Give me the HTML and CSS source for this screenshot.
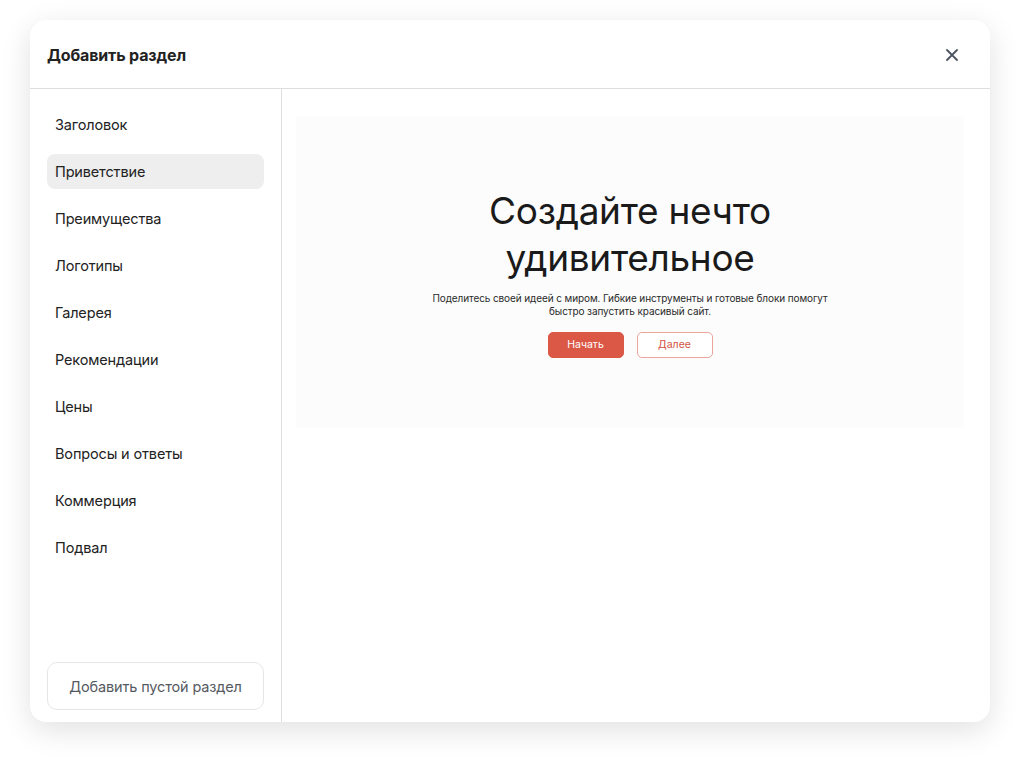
FILE: index.html
```html
<!DOCTYPE html>
<html lang="ru">
<head>
<meta charset="UTF-8">
<meta name="viewport" content="width=device-width, initial-scale=1.0">
<link rel="stylesheet" href="styles.css">
<title>Добавить раздел</title>
</head>
<body>
<div class="modal">
    <div class="modal-header">
        <h1>Добавить раздел</h1>
        <button class="close-btn" aria-label="Закрыть">
            <svg width="14" height="14" viewBox="0 0 14 14" fill="none">
                <path d="M2 2L12 12M12 2L2 12" stroke="#4b5260" stroke-width="1.8" stroke-linecap="round"/>
            </svg>
        </button>
    </div>
    <div class="modal-body">
        <div class="sidebar">
            <ul class="section-list">
                <li>Заголовок</li>
                <li class="active">Приветствие</li>
                <li>Преимущества</li>
                <li>Логотипы</li>
                <li>Галерея</li>
                <li>Рекомендации</li>
                <li>Цены</li>
                <li>Вопросы и ответы</li>
                <li>Коммерция</li>
                <li>Подвал</li>
            </ul>
            <button class="empty-btn">Добавить пустой раздел</button>
        </div>
        <div class="main">
            <div class="preview">
                <h2>Создайте нечто<br>удивительное</h2>
                <p>Поделитесь своей идеей с миром. Гибкие инструменты и готовые блоки помогут<br>быстро запустить красивый сайт.</p>
                <div class="preview-buttons">
                    <button class="btn-primary">Начать</button>
                    <button class="btn-outline">Далее</button>
                </div>
            </div>
        </div>
    </div>
</div>
</body>
</html>
```

FILE: styles.css
```css
body {
    font-family: Inter, "Noto Sans", sans-serif;
    margin: 0;
    padding: 20px 30px 40px;
    background-color: #ffffff;
}

.modal {
    height: 702px;
    background-color: #ffffff;
    border-radius: 16px;
    box-shadow: 0px 8px 30px rgba(0, 0, 0, 0.12);
    display: flex;
    flex-direction: column;
    overflow: hidden;
}

.modal-header {
    height: 69px;
    flex-shrink: 0;
    display: flex;
    align-items: center;
    justify-content: space-between;
    padding: 1px 26px 0 17px;
    box-sizing: border-box;
    border-bottom: 1px solid #dedede;
}

.modal-header h1 {
    margin: 0;
    font-size: 16px;
    font-weight: 700;
    letter-spacing: -0.15px;
    color: #222;
}

.close-btn {
    width: 24px;
    height: 24px;
    padding: 0;
    border: none;
    background: none;
    display: flex;
    align-items: center;
    justify-content: center;
    cursor: pointer;
}

.modal-body {
    flex: 1;
    display: flex;
    min-height: 0;
}

.sidebar {
    width: 252px;
    flex-shrink: 0;
    border-right: 1px solid #dedede;
    padding: 18px 17px 12px;
    box-sizing: border-box;
    display: flex;
    flex-direction: column;
    justify-content: space-between;
}

.section-list {
    list-style: none;
    margin: 0;
    padding: 0;
    display: flex;
    flex-direction: column;
    gap: 12px;
}

.section-list li {
    height: 35px;
    line-height: 36px;
    padding-left: 8px;
    border-radius: 8px;
    font-size: 14.5px;
    letter-spacing: -0.15px;
    color: #222;
    cursor: pointer;
}

.section-list li.active {
    background-color: #eeeeee;
}

.empty-btn {
    height: 48px;
    border: 1px solid #e6e6e6;
    border-radius: 10px;
    background-color: #ffffff;
    font-family: inherit;
    font-size: 14.5px;
    letter-spacing: -0.15px;
    color: #555a62;
    cursor: pointer;
}

.main {
    flex: 1;
    padding: 27px 26px 0 14px;
}

.preview {
    height: 312px;
    background-color: #fcfcfc;
    display: flex;
    flex-direction: column;
    align-items: center;
    justify-content: center;
    text-align: center;
}

.preview h2 {
    margin: 0;
    font-size: 37px;
    line-height: 47px;
    font-weight: 400;
    letter-spacing: -0.3px;
    color: #1a1a1a;
}

.preview p {
    margin: 11px 0 14px;
    font-size: 10px;
    line-height: 13px;
    letter-spacing: -0.1px;
    color: #2a2a2a;
}

.preview-buttons {
    display: flex;
    gap: 13px;
}

.preview-buttons button {
    width: 76px;
    height: 26px;
    border-radius: 5px;
    font-family: inherit;
    font-size: 10.5px;
    cursor: pointer;
}

.btn-primary {
    border: 1px solid #db5846;
    background-color: #db5846;
    color: #ffffff;
}

.btn-outline {
    border: 1px solid #eba59c;
    background-color: #ffffff;
    color: #d2523f;
}
```
